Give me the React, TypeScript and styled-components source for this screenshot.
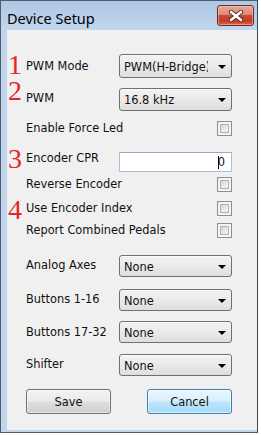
import React from 'react'
import styled, { createGlobalStyle } from 'styled-components'

const GlobalStyle = createGlobalStyle`
  html, body {
    margin: 0;
    padding: 0;
    background: #ffffff;
  }
`

const Window = styled.div`
  width: 258px;
  height: 433px;
  box-sizing: border-box;
  border: 1px solid #4f5d70;
  border-right-color: #3b4656;
  background: #c1d6ed;
  display: flex;
  flex-direction: column;
`

const TitleBar = styled.div`
  height: 29px;
  flex: none;
  display: flex;
  align-items: flex-start;
  justify-content: space-between;
  background: linear-gradient(to bottom, #aec8e5 0%, #b9d0ea 60%, #c1d6ed 100%);
  padding-left: 6px;
`

const Title = styled.div`
  font-family: 'Noto Sans', 'Open Sans', sans-serif;
  font-size: 14.5px;
  color: #000000;
  line-height: 16px;
  margin-top: 9px;
`

const CloseButton = styled.div`
  width: 37px;
  height: 21px;
  box-sizing: border-box;
  margin: 4px 3px 0 0;
  border: 1px solid #6e2d24;
  border-radius: 3px;
  background: linear-gradient(
    to bottom,
    #e8a998 0%,
    #dc8a78 45%,
    #c84a32 50%,
    #c2402a 80%,
    #d8674c 100%
  );
  box-shadow: inset 0 0 0 1px rgba(255, 210, 200, 0.45);
  display: flex;
  align-items: center;
  justify-content: center;
`

const Client = styled.div`
  flex: none;
  height: 400px;
  margin-left: 6px;
  background: #f0f0f0;
  padding-left: 1px;
  font-family: 'DejaVu Sans', Verdana, sans-serif;
  font-size: 11.4px;
  color: #111111;
  display: flex;
  flex-direction: column;
`

const Row = styled.div<{ $top: number; $h: number }>`
  display: grid;
  grid-template-columns: 18px 93px 113px;
  align-items: center;
  height: ${(p) => p.$h}px;
  margin-top: ${(p) => p.$top}px;
`

const Marker = styled.div<{ $shift?: number }>`
  font-family: 'Liberation Serif', 'Times New Roman', serif;
  font-size: 28px;
  line-height: 18px;
  color: #e3262b;
  transform: translateY(${(p) => p.$shift ?? 0}px);
`

const Label = styled.div<{ $lift?: number }>`
  white-space: nowrap;
  line-height: 13px;
  transform: translateY(${(p) => -(p.$lift ?? 0)}px);
`

const Combo = styled.div`
  height: 100%;
  box-sizing: border-box;
  border: 1px solid #707070;
  border-radius: 3px;
  background: linear-gradient(to bottom, #f3f3f3 0%, #ebebeb 45%, #dedede 100%);
  box-shadow: inset 0 1px 0 #fbfbfb;
  display: flex;
  align-items: center;
  padding: 1px 5px 0 4px;
`

const ComboText = styled.span`
  width: 84px;
  overflow: hidden;
  white-space: nowrap;
  flex: none;
`

const Arrow = styled.span`
  margin-left: auto;
  width: 0;
  height: 0;
  border-left: 4px solid transparent;
  border-right: 4px solid transparent;
  border-top: 4px solid #000000;
`

const Edit = styled.div`
  height: 100%;
  box-sizing: border-box;
  background: #ffffff;
  border: 1px solid #a9c0d8;
  border-top-color: #93abc6;
  display: flex;
  align-items: center;
  justify-content: flex-end;
  padding-right: 6px;
`

const Caret = styled.span`
  display: inline-block;
  width: 1px;
  height: 13px;
  background: #000000;
  margin-right: -1px;
  position: relative;
  z-index: 1;
`

const Check = styled.div`
  justify-self: end;
  width: 15px;
  height: 15px;
  box-sizing: border-box;
  border: 1px solid #8f8f8f;
  background: #f4f4f4;
  padding: 2px;

  &::after {
    content: '';
    display: block;
    width: 100%;
    height: 100%;
    border: 1px solid #aeb3b9;
    box-sizing: border-box;
    background: linear-gradient(135deg, #cfd2d6 0%, #e6e8ea 55%, #f7f7f7 100%);
  }
`

const ButtonRow = styled.div`
  display: flex;
  justify-content: space-between;
  width: 206px;
  margin: 13px 0 0 18px;
  height: 25px;
`

const Button = styled.div<{ $default?: boolean }>`
  width: 85px;
  height: 25px;
  box-sizing: border-box;
  border: 1px solid ${(p) => (p.$default ? '#3c7fb1' : '#707070')};
  border-radius: 3px;
  background: ${(p) =>
    p.$default
      ? 'linear-gradient(to bottom, #eaf6fd 0%, #d9f0fc 48%, #bee6fd 52%, #a7d9f5 100%)'
      : 'linear-gradient(to bottom, #f2f2f2 0%, #ebebeb 48%, #dddddd 52%, #cfcfcf 100%)'};
  box-shadow: inset 0 0 0 1px ${(p) => (p.$default ? 'rgba(255,255,255,0.6)' : 'rgba(255,255,255,0.55)')};
  display: flex;
  align-items: center;
  justify-content: center;
`

function CloseIcon() {
  return (
    <svg width="16" height="12" viewBox="0 0 16 12">
      <path d="M3 2 L13 10 M13 2 L3 10" stroke="#5b2a22" strokeWidth="4.4" strokeLinecap="round" />
      <path d="M3 2 L13 10 M13 2 L3 10" stroke="#ffffff" strokeWidth="2.6" strokeLinecap="round" />
    </svg>
  )
}

function ComboBox(props: { value: string }) {
  return (
    <Combo>
      <ComboText>{props.value}</ComboText>
      <Arrow />
    </Combo>
  )
}

export default function App() {
  return (
    <>
      <GlobalStyle />
      <Window>
        <TitleBar>
          <Title>Device Setup</Title>
          <CloseButton>
            <CloseIcon />
          </CloseButton>
        </TitleBar>
        <Client>
          <Row $top={24} $h={24}>
            <Marker $shift={-1}>1</Marker>
            <Label>PWM Mode</Label>
            <ComboBox value="PWM(H-Bridge)" />
          </Row>
          <Row $top={10} $h={23}>
            <Marker $shift={-9}>2</Marker>
            <Label $lift={1}>PWM</Label>
            <ComboBox value="16.8 kHz" />
          </Row>
          <Row $top={10} $h={15}>
            <span />
            <Label>Enable Force Led</Label>
            <Check />
          </Row>
          <Row $top={16} $h={20}>
            <Marker $shift={-3}>3</Marker>
            <Label $lift={4}>Encoder CPR</Label>
            <Edit>
              <Caret />
              <span>0</span>
            </Edit>
          </Row>
          <Row $top={5} $h={15}>
            <span />
            <Label>Reverse Encoder</Label>
            <Check />
          </Row>
          <Row $top={7} $h={15}>
            <Marker $shift={2}>4</Marker>
            <Label>Use Encoder Index</Label>
            <Check />
          </Row>
          <Row $top={9} $h={15}>
            <span />
            <Label>Report Combined Pedals</Label>
            <Check />
          </Row>
          <Row $top={17} $h={22}>
            <span />
            <Label $lift={1}>Analog Axes</Label>
            <ComboBox value="None" />
          </Row>
          <Row $top={12} $h={22}>
            <span />
            <Label $lift={1}>Buttons 1-16</Label>
            <ComboBox value="None" />
          </Row>
          <Row $top={10} $h={22}>
            <span />
            <Label>Buttons 17-32</Label>
            <ComboBox value="None" />
          </Row>
          <Row $top={11} $h={22}>
            <span />
            <Label $lift={1}>Shifter</Label>
            <ComboBox value="None" />
          </Row>
          <ButtonRow>
            <Button>Save</Button>
            <Button $default>Cancel</Button>
          </ButtonRow>
        </Client>
      </Window>
    </>
  )
}
